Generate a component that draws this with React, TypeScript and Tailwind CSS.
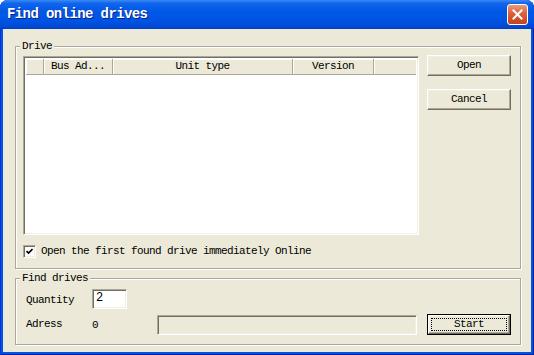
import React from 'react';

const columns = [
  { label: '', width: 'w-[18px]' },
  { label: 'Bus Ad...', width: 'w-[69px]' },
  { label: 'Unit type', width: 'w-[180px]' },
  { label: 'Version', width: 'w-[81px]' },
];

const raised =
  'border border-t-white border-l-white border-r-[#716F64] border-b-[#716F64] shadow-[inset_-1px_-1px_0_#ACA899,inset_1px_1px_0_#F1EFE2] bg-[#ECE9D8]';
const sunken =
  'border border-t-[#ACA899] border-l-[#ACA899] border-r-white border-b-white shadow-[inset_1px_1px_0_#716F64,inset_-1px_-1px_0_#F1EFE2]';
const etched = 'border border-[#ACA899] shadow-[inset_1px_1px_0_#fff,1px_1px_0_#fff]';

function GroupLabel({ text }: { text: string }) {
  return (
    <span className="absolute -top-[7px] left-[4px] bg-[#ECE9D8] px-[2px] leading-[12px]">{text}</span>
  );
}

function Button({ label, isDefault }: { label: string; isDefault?: boolean }) {
  if (isDefault) {
    return (
      <div className="w-[84px] h-[21px] border border-black">
        <div className={`h-full ${raised} p-[2px]`}>
          <div className="h-full border border-dotted border-black flex items-center justify-center leading-none">
            {label}
          </div>
        </div>
      </div>
    );
  }
  return (
    <div className={`w-[84px] h-[21px] ${raised} flex items-center justify-center leading-none`}>{label}</div>
  );
}

export default function App() {
  return (
    <div className="w-[534px] h-[355px] bg-white">
      <div className="w-full h-full flex flex-col rounded-t-[8px] bg-[#0054E3] shadow-[inset_1px_0_0_#0831D9,inset_-1px_0_0_#001EA0,inset_0_-1px_0_#001EA0] font-['Liberation_Mono',monospace] text-[11px] tracking-[-0.6px] text-black">
        {/* Title bar */}
        <div className="h-[29px] shrink-0 flex items-center justify-between rounded-t-[8px] bg-[linear-gradient(180deg,#3A8BF5_0%,#1164EC_12%,#0058E6_40%,#0054E3_70%,#004AD6_92%,#003DBF_100%)] pl-[7px] pr-[6px]">
          <span className="text-white font-bold text-[14px] tracking-[-0.6px] [text-shadow:1px_1px_0_#0A1F8A]">
            Find online drives
          </span>
          <div className="w-[21px] h-[21px] rounded-[3px] border border-white bg-[linear-gradient(180deg,#EC9A7E_0%,#D9603C_45%,#C6431F_100%)] flex items-center justify-center">
            <svg width="11" height="11" viewBox="0 0 11 11">
              <path d="M1.5 1.5 L9.5 9.5 M9.5 1.5 L1.5 9.5" stroke="white" strokeWidth="2" strokeLinecap="square" />
            </svg>
          </div>
        </div>

        {/* Body */}
        <div className="flex-1 mx-[3px] mb-[3px] bg-[#ECE9D8] pl-[12px] pr-[10px]">
          {/* Drive group */}
          <div className={`relative mt-[17px] h-[223px] ${etched}`}>
            <GroupLabel text="Drive" />
            <div className="flex gap-[8px] pt-[9px] pl-[7px]">
              <div className="w-[396px] flex flex-col">
                <div className={`h-[179px] bg-white ${sunken} p-[2px] flex flex-col`}>
                  <div className="h-[16px] flex bg-[#ECE9D8]">
                    {columns.map((c, i) => (
                      <div
                        key={i}
                        className={`${c.width} h-full border-r border-b border-[#ACA899] shadow-[inset_1px_1px_0_#fff] flex items-center justify-center leading-none`}
                      >
                        {c.label}
                      </div>
                    ))}
                    <div className="flex-1 h-full border-b border-[#ACA899] shadow-[inset_1px_1px_0_#fff]" />
                  </div>
                </div>
                <div className="mt-[10px] h-[13px] flex items-center gap-[5px]">
                  <div className={`w-[13px] h-[13px] bg-white ${sunken} flex items-center justify-center`}>
                    <svg width="7" height="7" viewBox="0 0 7 7">
                      <path d="M0.5 3 L2.5 5 L6.5 1" stroke="black" strokeWidth="1.6" fill="none" />
                    </svg>
                  </div>
                  <span className="leading-none">Open the first found drive immediately Online</span>
                </div>
              </div>
              <div className="flex flex-col gap-[13px] -mt-[1px]">
                <Button label="Open" />
                <Button label="Cancel" />
              </div>
            </div>
          </div>

          {/* Find drives group */}
          <div className={`relative mt-[9px] h-[67px] ${etched}`}>
            <GroupLabel text="Find drives" />
            <div className="flex flex-col gap-[5px] pt-[10px] pl-[10px]">
              <div className="flex items-center h-[20px]">
                <span className="w-[66px] pt-[2px]">Quantity</span>
                <div className={`w-[35px] h-[20px] bg-white ${sunken} pl-[3px] pt-[2px] leading-none text-[12px]`}>2</div>
              </div>
              <div className="flex items-center h-[21px]">
                <span className="w-[66px]">Adress</span>
                <span className="w-[65px] pt-[2px]">0</span>
                <div className={`w-[260px] h-[20px] ${sunken}`} />
                <div className="ml-[10px]">
                  <Button label="Start" isDefault />
                </div>
              </div>
            </div>
          </div>
        </div>
      </div>
    </div>
  );
}
